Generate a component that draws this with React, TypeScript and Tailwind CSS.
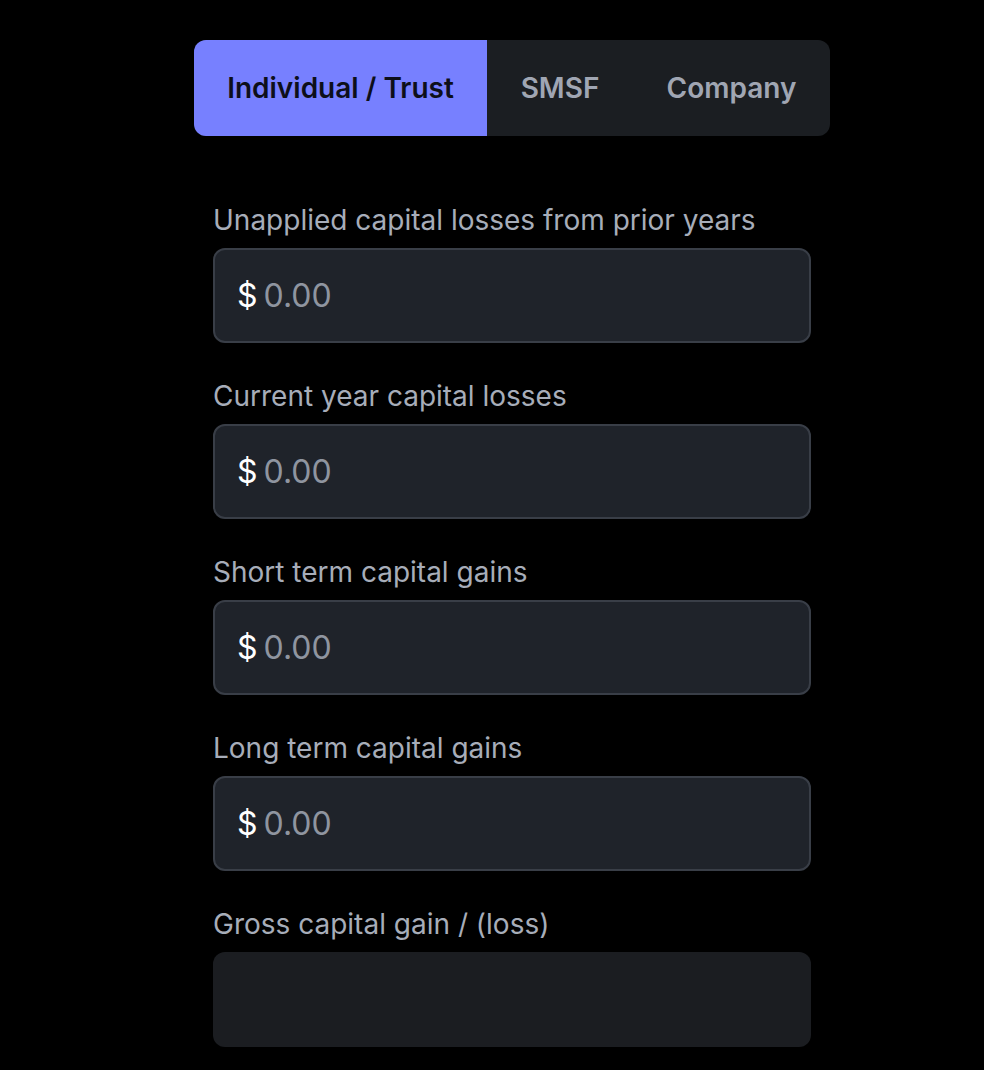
const fields = [
  "Unapplied capital losses from prior years",
  "Current year capital losses",
  "Short term capital gains",
  "Long term capital gains",
];

const tabs = [
  { label: "Individual / Trust", active: true, width: "w-[293px]" },
  { label: "SMSF", active: false, width: "w-[146px]" },
  { label: "Company", active: false, width: "flex-1" },
];

export default function App() {
  return (
    <div className="min-h-[1070px] bg-black font-['Inter','Noto_Sans',sans-serif]">
      <div className="ml-[194px] w-[636px] pt-[40px]">
        <div className="flex h-[96px] overflow-hidden rounded-[12px] bg-[#1b1e22]">
          {tabs.map((tab) => (
            <div
              key={tab.label}
              className={`${tab.width} flex shrink-0 items-center justify-center whitespace-nowrap text-[28px] font-semibold ${
                tab.active ? "bg-[#7780ff] text-[#0d0f1a]" : "text-[#a0a6b3]"
              }`}
            >
              {tab.label}
            </div>
          ))}
        </div>

        <div className="mt-[66px] px-[19px]">
          {fields.map((label) => (
            <div key={label} className="mb-[35px]">
              <div className="mb-[10px] h-[36px] text-[28px] leading-[36px] text-[#a7adb9]">
                {label}
              </div>
              <div className="flex h-[95px] items-center rounded-[12px] border-2 border-[#393e47] bg-[#1f232a] px-[22px] text-[32px]">
                <span className="text-white">$</span>
                <span className="ml-[6px] text-[#8f95a0]">0.00</span>
              </div>
            </div>
          ))}
          <div className="mb-[10px] h-[36px] text-[28px] leading-[36px] text-[#a7adb9]">
            Gross capital gain / (loss)
          </div>
          <div className="h-[95px] rounded-[12px] bg-[#1b1d21]" />
        </div>
      </div>
    </div>
  );
}
